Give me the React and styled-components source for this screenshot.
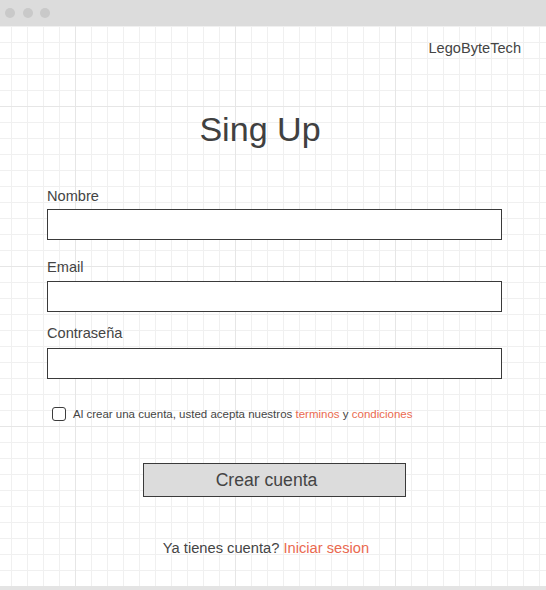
import React from "react";
import styled, { createGlobalStyle } from "styled-components";

const Global = createGlobalStyle`
  html, body { margin: 0; padding: 0; }
  body { font-family: "Liberation Sans", Arial, sans-serif; color: #444; }
  * { box-sizing: border-box; }
`;

const Window = styled.div`
  width: 546px;
  height: 590px;
  display: flex;
  flex-direction: column;
  background: #fff;
  overflow: hidden;
`;

const TitleBar = styled.div`
  height: 26px;
  flex: 0 0 26px;
  background: #dcdcdc;
  display: flex;
  align-items: center;
  gap: 7.7px;
  padding-left: 5px;
`;

const Dot = styled.span`
  width: 10px;
  height: 10px;
  border-radius: 50%;
  background: #c9c9c9;
`;

const Canvas = styled.div`
  flex: 1;
  display: flex;
  flex-direction: column;
  background-color: #fff;
  background-image:
    linear-gradient(to right, #e6e6e6 1px, transparent 1px),
    linear-gradient(to bottom, #e6e6e6 1px, transparent 1px),
    linear-gradient(to right, #f0f0f0 1px, transparent 1px),
    linear-gradient(to bottom, #f0f0f0 1px, transparent 1px);
  background-size: 160px 160px, 160px 160px, 16px 16px, 16px 16px;
  background-position: 75px 80px, 75px 80px, 11px 0, 11px 0;
`;

const BottomBar = styled.div`
  height: 4px;
  flex: 0 0 4px;
  background: #e4e4e4;
`;

const Brand = styled.div`
  align-self: flex-end;
  margin-top: 14px;
  padding-right: 25px;
  font-size: 14.6px;
  line-height: 16px;
  color: #444;
`;

const Title = styled.h1`
  margin: 53px 0 0;
  padding-right: 26px;
  text-align: center;
  font-weight: normal;
  font-size: 34.1px;
  line-height: 40px;
  color: #404040;
`;

const Form = styled.form`
  margin: 39px 0 0;
  padding: 0 44px 0 47px;
  display: flex;
  flex-direction: column;
`;

const Field = styled.div`
  display: flex;
  flex-direction: column;
  gap: ${(p) => p.$gap}px;
  margin-bottom: ${(p) => p.$after}px;
`;

const Label = styled.label`
  font-size: 14.6px;
  line-height: 16px;
  color: #444;
`;

const TextInput = styled.input`
  width: 100%;
  height: 31px;
  border: 1px solid #3a3a3a;
  border-radius: 0;
  background: #fff;
  padding: 0 6px;
  font: inherit;
  outline: none;
`;

const CheckRow = styled.div`
  display: flex;
  align-items: center;
  gap: 7px;
  margin: 28px 0 0 5px;
  font-size: 11.5px;
  line-height: 14px;
  color: #444;
`;

const Box = styled.input`
  appearance: none;
  margin: 0;
  width: 14px;
  height: 14px;
  border: 1.4px solid #3c3c3c;
  border-radius: 3px;
  background: #fff;
`;

const Link = styled.a`
  color: #ea6a50;
  text-decoration: none;
`;

const Button = styled.button`
  align-self: center;
  margin-top: 42px;
  width: 263px;
  height: 34px;
  background: #dcdcdc;
  border: 1px solid #3a3a3a;
  border-radius: 0;
  font-family: "Liberation Sans", Arial, sans-serif;
  font-size: 17.6px;
  color: #444;
  padding: 0 16px 0 0;
`;

const Footer = styled.p`
  margin: 43px 0 0;
  padding-right: 14px;
  text-align: center;
  font-size: 14.7px;
  line-height: 17px;
  color: #444;
`;

export default function App() {
  return (
    <>
      <Global />
      <Window>
        <TitleBar>
          <Dot />
          <Dot />
          <Dot />
        </TitleBar>
        <Canvas>
          <Brand>LegoByteTech</Brand>
          <Title>Sing Up</Title>
          <Form onSubmit={(e) => e.preventDefault()}>
            <Field $gap={5} $after={19}>
              <Label>Nombre</Label>
              <TextInput type="text" />
            </Field>
            <Field $gap={6} $after={13}>
              <Label>Email</Label>
              <TextInput type="email" />
            </Field>
            <Field $gap={7} $after={0}>
              <Label>Contraseña</Label>
              <TextInput type="password" />
            </Field>
            <CheckRow>
              <Box type="checkbox" />
              <span>
                Al crear una cuenta, usted acepta nuestros{" "}
                <Link>terminos</Link> y <Link>condiciones</Link>
              </span>
            </CheckRow>
            <Button type="button">Crear cuenta</Button>
          </Form>
          <Footer>
            Ya tienes cuenta? <Link>Iniciar sesion</Link>
          </Footer>
        </Canvas>
        <BottomBar />
      </Window>
    </>
  );
}
